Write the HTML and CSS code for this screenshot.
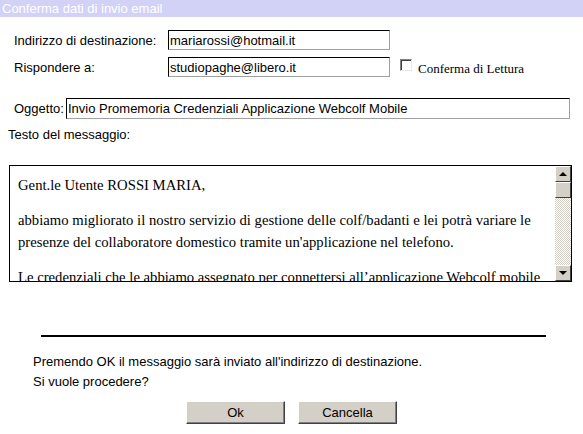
FILE: index.html
```html
<!DOCTYPE html>
<html lang="it">
<head>
    <meta charset="UTF-8">
    <title>Conferma dati di invio email</title>
    <link rel="stylesheet" href="styles.css">
</head>
<body>
    <div class="titlebar">Conferma dati di invio email</div>

    <div class="row row-dest">
        <label class="lbl">Indirizzo di destinazione:</label>
        <input type="text" class="field" value="mariarossi@hotmail.it">
    </div>
    <div class="row row-reply">
        <label class="lbl">Rispondere a:</label>
        <input type="text" class="field" value="studiopaghe@libero.it">
        <span class="check"></span>
        <span class="check-lbl">Conferma di Lettura</span>
    </div>
    <div class="row row-subj">
        <label class="lbl-subj">Oggetto:</label>
        <input type="text" class="field field-subj" value="Invio Promemoria Credenziali Applicazione Webcolf Mobile">
    </div>

    <div class="msg-lbl">Testo del messaggio:</div>

    <div class="msgbox">
        <div class="msg-text">
            <p>Gent.le Utente ROSSI MARIA,</p>
            <p>abbiamo migliorato il nostro servizio di gestione delle colf/badanti e lei potrà variare le presenze del collaboratore domestico tramite un'applicazione nel telefono.</p>
            <p>Le credenziali che le abbiamo assegnato per connettersi all’applicazione Webcolf mobile sono le seguenti:</p>
        </div>
        <div class="scrollbar">
            <div class="sb-btn"><span class="arrow-up"></span></div>
            <div class="sb-thumb"></div>
            <div class="sb-track"></div>
            <div class="sb-btn"><span class="arrow-down"></span></div>
        </div>
    </div>

    <hr class="sep">

    <div class="confirm">
        <div>Premendo OK il messaggio sarà inviato all'indirizzo di destinazione.</div>
        <div>Si vuole procedere?</div>
    </div>

    <div class="buttons">
        <button class="btn">Ok</button>
        <button class="btn">Cancella</button>
    </div>
</body>
</html>
```

FILE: styles.css
```css
body {
    margin: 0;
    background: #ffffff;
    color: #000000;
    font-family: "Liberation Sans", Arial, sans-serif;
    font-size: 13px;
}
.titlebar {
    height: 17px;
    line-height: 17px;
    padding-left: 2px;
    background: #d2d2f6;
    color: #ffffff;
}
.row {
    display: flex;
    align-items: center;
    padding-left: 14px;
}
.row-dest {
    margin-top: 13px;
}
.row-reply {
    margin-top: 7px;
}
.row-subj {
    margin-top: 21px;
}
.lbl {
    width: 154px;
}
.lbl-subj {
    width: 52px;
}
.field {
    box-sizing: border-box;
    width: 222px;
    height: 20px;
    margin: 0;
    padding: 0 1px;
    border: 1px solid;
    border-color: #000000 #a0a0a0 #a0a0a0 #000000;
    font-family: "Liberation Sans", Arial, sans-serif;
    font-size: 13px;
    color: #000000;
    outline: none;
}
.field-subj {
    width: 504px;
    height: 21px;
}
.check {
    box-sizing: border-box;
    width: 12px;
    height: 12px;
    margin-left: 10px;
    margin-top: -4px;
    border: 1px solid;
    border-color: #808080 #e8e8e8 #e8e8e8 #808080;
    box-shadow: inset 1px 1px 0 #404040;
    background: #ffffff;
}
.check-lbl {
    margin-left: 6px;
    margin-top: 3px;
    font-family: "Liberation Serif", "Times New Roman", serif;
    font-size: 13px;
}
.msg-lbl {
    margin-top: 9px;
    padding-left: 8px;
    line-height: 14px;
}
.msgbox {
    box-sizing: border-box;
    display: flex;
    width: 563px;
    height: 117px;
    margin: 23px 0 0 9px;
    border: 1px solid #000000;
    overflow: hidden;
}
.msg-text {
    flex: 1;
    padding: 8px 0 0 8px;
    font-family: "Liberation Serif", "Times New Roman", serif;
    font-size: 14.7px;
    line-height: 22px;
}
.msg-text p {
    margin: 0 0 13px;
}
.scrollbar {
    display: flex;
    flex-direction: column;
    width: 16px;
}
.sb-btn, .sb-thumb {
    box-sizing: border-box;
    height: 16px;
    background: #d4d0c8;
    border: 1px solid;
    border-color: #ffffff #404040 #404040 #ffffff;
    display: flex;
    align-items: center;
    justify-content: center;
}
.sb-track {
    flex: 1;
    background: repeating-conic-gradient(#d4d0c8 0 25%, #ffffff 0 50%) 0 0 / 2px 2px;
}
.arrow-up, .arrow-down {
    width: 0;
    height: 0;
    border-left: 4px solid transparent;
    border-right: 4px solid transparent;
}
.arrow-up {
    border-bottom: 4px solid #000000;
}
.arrow-down {
    border-top: 4px solid #000000;
}
.sep {
    width: 505px;
    height: 2px;
    margin: 53px 0 0 41px;
    border: none;
    background: #000000;
}
.confirm {
    margin-top: 15px;
    padding-left: 33px;
    line-height: 20px;
}
.buttons {
    display: flex;
    gap: 13px;
    margin-top: 9px;
    padding-left: 186px;
}
.btn {
    box-sizing: border-box;
    width: 99px;
    height: 23px;
    padding: 0;
    background: #d4d0c8;
    border: 1px solid;
    border-color: #ffffff #404040 #404040 #ffffff;
    box-shadow: inset -1px -1px 0 #808080;
    font-family: "Liberation Sans", Arial, sans-serif;
    font-size: 13px;
    color: #000000;
}
```
